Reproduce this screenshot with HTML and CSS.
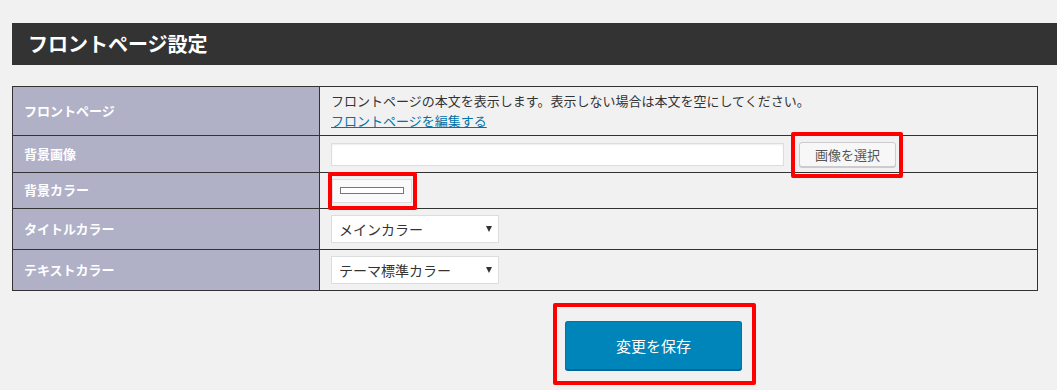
FILE: index.html
```html
<!DOCTYPE html>
<html lang="ja">
<head>
    <meta charset="UTF-8">
    <meta name="viewport" content="width=device-width, initial-scale=1.0">
    <title>フロントページ設定</title>
    <link rel="stylesheet" href="styles.css">
</head>
<body>
    <div class="wrap">
        <h2 class="page-title">フロントページ設定</h2>

        <table class="form-table">
            <colgroup>
                <col class="col-label">
                <col>
            </colgroup>
            <tbody>
                <tr class="row-front">
                    <th>フロントページ</th>
                    <td>
                        フロントページの本文を表示します。表示しない場合は本文を空にしてください。<br>
                        <a href="#" class="edit-link">フロントページを編集する</a>
                    </td>
                </tr>
                <tr class="row-image">
                    <th>背景画像</th>
                    <td>
                        <div class="field-line">
                            <input type="text" class="image-url">
                            <span class="mark mark-media">
                                <button class="button">画像を選択</button>
                            </span>
                        </div>
                    </td>
                </tr>
                <tr class="row-color">
                    <th>背景カラー</th>
                    <td>
                        <span class="mark mark-swatch">
                            <button class="swatch"><span class="swatch-bar"></span></button>
                        </span>
                    </td>
                </tr>
                <tr class="row-select">
                    <th>タイトルカラー</th>
                    <td>
                        <span class="select-box">
                            <select>
                                <option>メインカラー</option>
                            </select>
                        </span>
                    </td>
                </tr>
                <tr class="row-select">
                    <th>テキストカラー</th>
                    <td>
                        <span class="select-box">
                            <select>
                                <option>テーマ標準カラー</option>
                            </select>
                        </span>
                    </td>
                </tr>
            </tbody>
        </table>

        <div class="submit">
            <span class="mark mark-save">
                <button class="button-primary">変更を保存</button>
            </span>
        </div>
    </div>
</body>
</html>
```

FILE: styles.css
```css
/* General */
body {
    margin: 0;
    padding: 0;
    background: #f1f1f1;
    font-family: "Noto Sans CJK JP", "Noto Sans", sans-serif;
    color: #333;
}

.wrap {
    padding: 23px 0 0 12px;
}

/* Title bar */
.page-title {
    margin: 0;
    height: 42px;
    line-height: 42px;
    padding-left: 16px;
    background: #333;
    color: #fff;
    font-size: 20px;
    font-weight: bold;
}

/* Settings table */
.form-table {
    margin-top: 21px;
    width: 1026px;
    border-collapse: collapse;
    border: 1px solid #333;
    font-size: 13px;
}

.col-label {
    width: 307px;
}

.form-table th,
.form-table td {
    border: 1px solid #333;
    padding: 0 11px;
    vertical-align: middle;
}

.form-table th {
    background: #b0b0c7;
    color: #fff;
    font-weight: bold;
    text-align: left;
    padding-bottom: 2px;
}

.form-table td {
    line-height: 20px;
}

.row-front { height: 49px; }
.row-image { height: 37px; }
.row-color { height: 36px; }
.row-select { height: 41px; }

.row-front td {
    padding-top: 4px;
    padding-bottom: 4px;
}

.edit-link {
    color: #0073aa;
    text-decoration: underline;
}

/* Image field */
.field-line {
    display: flex;
    align-items: center;
}

.image-url {
    box-sizing: border-box;
    width: 453px;
    height: 23px;
    margin: 0;
    border: 1px solid #ddd;
    background: #fff;
    box-shadow: inset 0 1px 2px rgba(0, 0, 0, 0.07);
}

.button {
    box-sizing: border-box;
    width: 97px;
    height: 25px;
    margin: 0;
    border: 1px solid #ccc;
    border-radius: 3px;
    background: #f7f7f7;
    box-shadow: 0 1px 0 #ccc;
    color: #555;
    font-family: inherit;
    font-size: 13px;
    padding: 0;
}

/* Color picker */
.swatch {
    box-sizing: border-box;
    display: flex;
    align-items: center;
    width: 80px;
    height: 24px;
    margin: 0;
    padding: 0 0 0 7px;
    border: 1px solid #ddd;
    background: #fafafa;
}

.swatch-bar {
    box-sizing: border-box;
    display: block;
    width: 64px;
    height: 7px;
    border: 1px solid #777;
    background: #fff;
}

/* Selects */
.select-box {
    position: relative;
    display: inline-block;
    vertical-align: middle;
}

.select-box select {
    box-sizing: border-box;
    width: 168px;
    height: 28px;
    margin: 0;
    padding: 0 0 0 7px;
    border: 1px solid #ddd;
    border-radius: 0;
    background: #fff;
    color: #333;
    font-family: inherit;
    font-size: 14px;
    appearance: none;
    -webkit-appearance: none;
}

.select-box::after {
    content: "";
    position: absolute;
    top: 11px;
    right: 7px;
    border-left: 3px solid transparent;
    border-right: 3px solid transparent;
    border-top: 6px solid #333;
    pointer-events: none;
}

/* Save */
.submit {
    padding: 30px 0 20px 541px;
}

.button-primary {
    box-sizing: border-box;
    width: 177px;
    height: 49px;
    margin: 0;
    border: 1px solid #0073aa;
    border-bottom-color: #006799;
    border-radius: 3px;
    background: #0085ba;
    box-shadow: 0 1px 0 #006799;
    color: #fff;
    font-family: inherit;
    font-size: 15px;
}

/* Red highlight marks */
.mark {
    position: relative;
    display: inline-block;
    vertical-align: middle;
}

.mark > button {
    display: block;
}

.mark::after {
    content: "";
    position: absolute;
    box-sizing: border-box;
    border: 4px solid #f00;
    border-radius: 2px;
    pointer-events: none;
}

.mark-media {
    margin-left: 15px;
}

.mark-media::after {
    left: -8px;
    right: -7px;
    top: -10px;
    bottom: -11px;
}

.mark-swatch {
    margin-left: 1px;
}

.mark-swatch::after {
    left: -4px;
    right: -5px;
    top: -7px;
    bottom: -7px;
}

.mark-save {
    margin-left: 12px;
}

.mark-save::after {
    left: -12px;
    right: -14px;
    top: -18px;
    bottom: -15px;
}
```
